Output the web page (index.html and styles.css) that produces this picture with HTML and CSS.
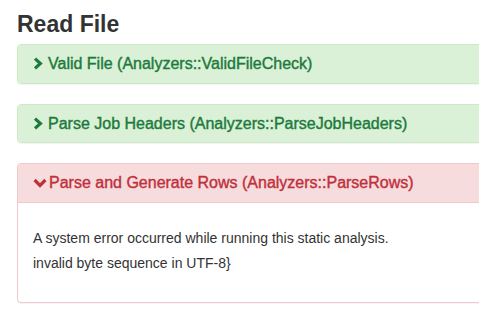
FILE: index.html
```html
<!DOCTYPE html>
<html>
<head>
<meta charset="utf-8">
<link rel="stylesheet" href="styles.css">
</head>
<body>
<div class="container">
  <h3 class="section-title first">Read File</h3>
  <div class="panel panel-success">
    <div class="panel-heading">
      <span class="chev"><svg width="10" height="13" viewBox="0 0 10 13"><path d="M2 1.6 L7.4 6.5 L2 11.4" fill="none" stroke="currentColor" stroke-width="3.2" stroke-linejoin="miter"/></svg></span>Valid File (Analyzers::ValidFileCheck)
    </div>
  </div>
  <div class="panel panel-success">
    <div class="panel-heading">
      <span class="chev"><svg width="10" height="13" viewBox="0 0 10 13"><path d="M2 1.6 L7.4 6.5 L2 11.4" fill="none" stroke="currentColor" stroke-width="3.2" stroke-linejoin="miter"/></svg></span>Parse Job Headers (Analyzers::ParseJobHeaders)
    </div>
  </div>
  <div class="panel panel-danger">
    <div class="panel-heading">
      <span class="chev down"><svg width="14" height="10" viewBox="0 0 14 10"><path d="M1.6 2 L7 7.4 L12.4 2" fill="none" stroke="currentColor" stroke-width="3.2" stroke-linejoin="miter"/></svg></span>Parse and Generate Rows (Analyzers::ParseRows)
    </div>
    <div class="panel-body">
      <p>A system error occurred while running this static analysis.</p>
      <p>invalid byte sequence in UTF-8}</p>
    </div>
  </div>
  <h3 class="section-title">Static Analysis</h3>
</div>
</body>
</html>
```
FILE: styles.css
```css
html, body {
  margin: 0;
  padding: 0;
  background: #fff;
  overflow: hidden;
}
body {
  font-family: "Liberation Sans", Arial, sans-serif;
  font-size: 14px;
  line-height: 20px;
  color: #333;
  width: 479px;
  height: 329px;
}
.container {
  padding-left: 17px;
  width: 520px;
}
.section-title {
  font-size: 23px;
  font-weight: bold;
  line-height: 25px;
  margin: 24px 0 7px;
  color: #333;
}
.section-title.first {
  margin-top: 12px;
}
.panel {
  border: 1px solid transparent;
  border-radius: 4px;
  margin-bottom: 20px;
  background: #fff;
  box-shadow: 0 1px 1px rgba(0, 0, 0, 0.05);
}
.panel-heading {
  padding: 10px 15px;
  font-size: 16px;
  line-height: 17.6px;
  border-bottom: 1px solid transparent;
  border-radius: 3px 3px 0 0;
  display: flex;
  align-items: center;
  -webkit-text-stroke: 0.4px currentColor;
}
.panel-success {
  border-color: #cde9c6;
}
.panel-success > .panel-heading {
  background: #daf1d7;
  color: #1c7a3c;
  border-bottom: 0;
  border-radius: 3px;
}
.panel-danger {
  border-color: #f1c8cc;
}
.panel-danger > .panel-heading {
  background: #f7dcde;
  color: #c0303a;
  border-bottom-color: #f1c8cc;
}
.chev {
  display: inline-flex;
  align-items: center;
  justify-content: center;
  width: 10px;
  margin-left: 0;
  margin-right: 5px;
}
.chev.down {
  width: 14px;
  margin-left: 0;
  margin-right: 2px;
}
.chev svg {
  display: block;
}
.panel-body {
  padding: 25px 15px 29px;
}
.panel-body p {
  margin: 0 0 5px;
}
.panel-body p:last-child {
  margin-bottom: 0;
}
```
